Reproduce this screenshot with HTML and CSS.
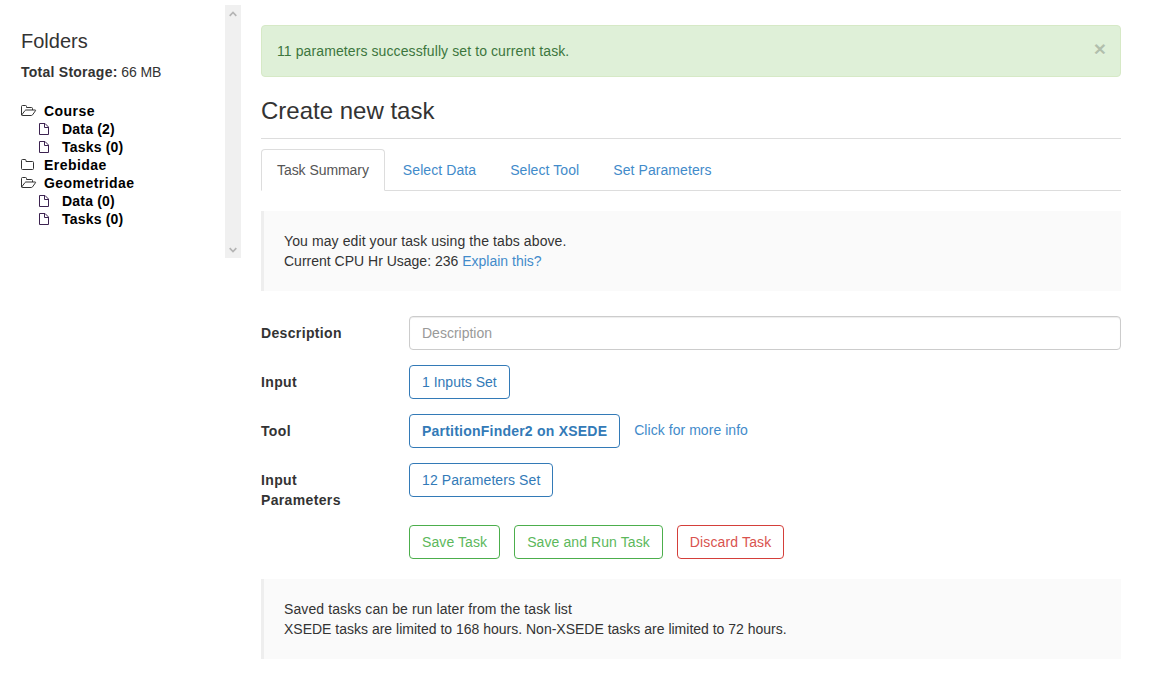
FILE: index.html
```html
<!DOCTYPE html>
<html lang="en">
<head>
<meta charset="utf-8">
<title>Create new task</title>
<link rel="stylesheet" href="styles.css">
</head>
<body>
<svg class="defs" width="0" height="0">
  <symbol id="open" viewBox="0 0 16 12"><path d="M.5 10V1.500Q.5 .5 1.500 .5H4.500Q5.500 .5 5.500 1.500V2.500H10.500Q11.500 2.500 11.500 3.500V5M.7 10L4 5.500Q4.400 5 5 5H14Q15 5 14.500 5.700L11.600 9.800Q11 10.500 10.300 10.500H1.200Q.5 10.500 .5 9.800"/></symbol>
  <symbol id="closed" viewBox="0 0 16 12"><path d="M.5 1.500Q.5 .5 1.500 .5H4Q5 .5 5 1.500V2.500H11.500Q12.500 2.500 12.500 3.500V9.500Q12.500 10.500 11.500 10.500H1.500Q.5 10.500 .5 9.500Z"/></symbol>
  <symbol id="file" viewBox="0 0 11 13"><path d="M.5 .5H6L9.500 4V11.500H.5ZM5.500 .5V4.500H9.500"/></symbol>
</svg>
<div class="page">
  <aside class="sidebar">
    <div class="folders">
      <h4 class="folders-title">Folders</h4>
      <p class="storage"><b>Total Storage:</b> 66 MB</p>
      <ul class="tree">
        <li class="node"><svg class="ico"><use href="#open"/></svg>Course</li>
        <li class="node leaf"><svg class="ico doc"><use href="#file"/></svg>Data (2)</li>
        <li class="node leaf"><svg class="ico doc"><use href="#file"/></svg>Tasks (0)</li>
        <li class="node"><svg class="ico"><use href="#closed"/></svg>Erebidae</li>
        <li class="node"><svg class="ico"><use href="#open"/></svg>Geometridae</li>
        <li class="node leaf"><svg class="ico doc"><use href="#file"/></svg>Data (0)</li>
        <li class="node leaf"><svg class="ico doc"><use href="#file"/></svg>Tasks (0)</li>
      </ul>
    </div>
    <div class="scrollbar">
      <svg class="arrow" viewBox="0 0 8 6"><path d="M.7 4.800L4 1.500L7.300 4.800"/></svg>
      <svg class="arrow" viewBox="0 0 8 6"><path d="M.7 1.200L4 4.500L7.300 1.200"/></svg>
    </div>
  </aside>
  <main class="main">
    <div class="alert"><span class="loose">11 parameters successfully set to current task.</span><span class="close">×</span></div>
    <h3 class="title">Create new task</h3>
    <nav class="tabs">
      <a class="tab active">Task Summary</a>
      <a class="tab">Select Data</a>
      <a class="tab">Select Tool</a>
      <a class="tab">Set Parameters</a>
    </nav>
    <div class="callout"><span class="loose">You may edit your task using the tabs above.</span><br>Current CPU Hr Usage: 236 <a class="link">Explain this?</a></div>
    <form class="form">
      <label class="label">Description</label>
      <input class="field" type="text" placeholder="Description">
      <label class="label">Input</label>
      <div class="cell"><a class="btn">1 Inputs Set</a></div>
      <label class="label">Tool</label>
      <div class="cell"><a class="btn strong">PartitionFinder2 on XSEDE</a><a class="link info">Click for more info</a></div>
      <label class="label">Input Parameters</label>
      <div class="cell"><a class="btn loose">12 Parameters Set</a></div>
    </form>
    <div class="actions">
      <a class="btn green">Save Task</a>
      <a class="btn green">Save and Run Task</a>
      <a class="btn red">Discard Task</a>
    </div>
    <div class="callout last"><span class="loose">Saved tasks can be run later from the task list</span><br>XSEDE tasks are limited to 168 hours. Non-XSEDE tasks are limited to 72 hours.</div>
  </main>
</div>
</body>
</html>
```
FILE: styles.css
```css
* { box-sizing: border-box; }
body { margin: 0; background: #fff; color: #333; font: 14px/20px "Liberation Sans", Arial, sans-serif; }
.defs { display: block; height: 0; }
.page { display: flex; align-items: flex-start; gap: 20px; padding: 5px 37px 0 5px; }
.sidebar { display: flex; width: 236px; height: 253px; flex: none; }
.folders { flex: 1; padding: 25px 0 0 16px; }
.folders-title { margin: 0; font-size: 20px; font-weight: 400; line-height: 22px; }
.storage { margin: 10px 0 20px; letter-spacing: -.1px; }
.storage b { letter-spacing: .25px; }
.tree { margin: 0; padding: 0; list-style: none; }
.node { display: flex; align-items: center; height: 18px; color: #000; font-weight: 700; letter-spacing: .45px; }
.ico { width: 16px; height: 12px; margin-right: 7px; fill: none; stroke: #333; stroke-width: 1; }
.leaf { padding-left: 18px; letter-spacing: .2px; }
.doc { width: 11px; height: 13px; margin-right: 12px; stroke: #3c2350; }
.scrollbar { display: flex; flex-direction: column; justify-content: space-between; align-items: center; width: 16px; padding: 6px 0 5px; background: #f0f0f0; }
.arrow { width: 8px; height: 6px; margin-right: 1px; fill: none; stroke: #b4b4b4; stroke-width: 1.700; }
.main { flex: 1; padding-top: 20px; }
.loose { letter-spacing: .1px; }
.alert { display: flex; justify-content: space-between; height: 52px; padding: 15px 14px 15px 15px; border: 1px solid #d6e9c6; border-radius: 4px; background: #dff0d8; color: #3c763d; }
.close { color: #000; opacity: .2; font-size: 21px; font-weight: 700; line-height: 16px; text-shadow: 0 1px 0 #fff; }
.title { height: 62px; margin: 0; padding-top: 20px; border-bottom: 1px solid #ddd; font-size: 24px; font-weight: 400; line-height: 27px; }
.tabs { display: flex; gap: 2px; height: 42px; margin-top: 10px; border-bottom: 1px solid #ddd; }
.tab { height: 42px; padding: 10px 15px; border: 1px solid transparent; color: #428bca; letter-spacing: .08px; }
.tab.active { border-color: #ddd #ddd #fff; border-radius: 4px 4px 0 0; background: #fff; color: #555; letter-spacing: -.06px; }
.callout { height: 80px; margin-top: 20px; padding: 20px; border-left: 3px solid #eee; background: #fafafa; }
.link { color: #428bca; }
.form { display: grid; grid-template-columns: 110px 1fr; column-gap: 38px; grid-template-rows: 34px 34px 34px 47px; row-gap: 15px; margin-top: 25px; }
.label { padding-top: 7px; font-weight: 700; letter-spacing: .35px; }
.field { width: 100%; height: 34px; padding: 6px 12px; border: 1px solid #ccc; border-radius: 4px; box-shadow: inset 0 1px 1px rgba(0,0,0,.075); font: inherit; }
.field::placeholder { color: #999; opacity: 1; }
.cell { display: flex; align-items: flex-start; gap: 14px; }
.btn { height: 34px; padding: 6px 12px; border: 1px solid #337ab7; border-radius: 4px; color: #337ab7; white-space: nowrap; }
.strong { font-weight: 700; letter-spacing: .22px; }
.info { padding-top: 6px; letter-spacing: .05px; }
.actions { display: flex; gap: 14px; margin: 15px 0 0 148px; }
.green { border-color: #4cae4c; color: #5cb85c; letter-spacing: .09px; }
.red { border-color: #d43f3a; color: #d9534f; letter-spacing: .14px; }
```
